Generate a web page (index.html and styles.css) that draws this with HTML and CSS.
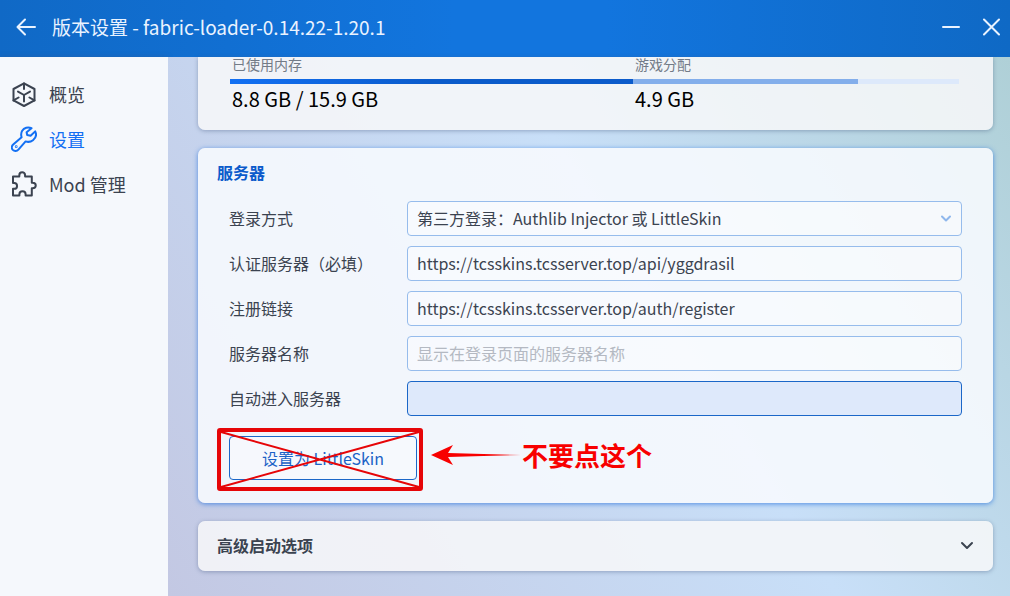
FILE: index.html
```
<!DOCTYPE html>
<html lang="zh-CN">
<head>
  <meta charset="UTF-8" />
  <meta name="viewport" content="width=device-width, initial-scale=1.0"/>
  <title>版本设置</title>
  <link rel="stylesheet" href="styles.css">
</head>
<body>
  <header class="title_bar">
    <button class="icon_button" aria-label="返回">
      <svg width="20" height="18" viewBox="0 0 20 18"><path d="M19 9H1.5M9 1.5L1.5 9L9 16.5"/></svg>
    </button>
    <h1 class="title">版本设置 - fabric-loader-0.14.22-1.20.1</h1>
    <button class="icon_button" aria-label="最小化">
      <svg width="20" height="18" viewBox="0 0 20 18"><path d="M3 9H19"/></svg>
    </button>
    <button class="icon_button" aria-label="关闭">
      <svg width="20" height="18" viewBox="0 0 20 18"><path d="M4 1.5L19 16.5M19 1.5L4 16.5"/></svg>
    </button>
  </header>

  <div class="layout">
    <nav class="sidebar">
      <a href="#" class="nav_item">
        <svg class="nav_icon" viewBox="0 0 26 26">
          <path d="M13 2.3L23.5 8V19.4L13 25L2.5 19.4V8Z"/>
          <path d="M13 14V20.5M13 14L7 10.6M13 14L19 10.6M13 2.5V8M2.5 19.4L7.6 16.5M23.5 19.4L18.4 16.5"/>
        </svg>
        概览
      </a>
      <a href="#" class="nav_item active">
        <svg class="nav_icon" viewBox="0 0 26 26">
          <path d="M20.5 2.2C17 .6 13 1.8 11.2 4.8C10 6.8 9.9 9 10.6 11.2L2.2 18.4C.4 20 .3 22.3 1.8 23.9C3.4 25.5 5.9 25.3 7.4 23.6L14.6 15.4C17 16.2 19.8 15.9 22 14.2C24.9 11.9 25.6 8.3 24.2 5.4L19.6 9.8L16.2 9L15.6 6.2Z"/>
          <circle cx="5.2" cy="20.7" r=".4"/>
        </svg>
        设置
      </a>
      <a href="#" class="nav_item">
        <svg class="nav_icon" viewBox="0 0 26 26">
          <path d="M2 5.5H8.3V4.4C8.3 .2 14.1 .2 14.1 4.4V5.5H20.8V11.8H21.6C25.8 11.8 25.8 17.2 21.6 17.2H20.8V24.5H14.6V23.2C14.6 19.2 8.4 19.2 8.4 23.2V24.5H2V17.8H3.2C7 17.8 7 12 3.2 12H2Z"/>
        </svg>
        Mod 管理
      </a>
    </nav>

    <main class="content">
      <section class="card memory_card">
        <div class="memory_col used">
          <p class="memory_label">已使用内存</p>
          <div class="bar bar_used"></div>
          <p class="memory_value">8.8 GB / 15.9 GB</p>
        </div>
        <div class="memory_col game">
          <p class="memory_label">游戏分配</p>
          <div class="bar bar_game"></div>
          <p class="memory_value">4.9 GB</p>
        </div>
        <div class="memory_col free">
          <div class="bar"></div>
        </div>
      </section>

      <section class="card server_card">
        <h2 class="card_title">服务器</h2>
        <form class="server_form">
          <label for="login_type">登录方式</label>
          <div class="select_box">
            <select id="login_type" class="field">
              <option>第三方登录：Authlib Injector 或 LittleSkin</option>
            </select>
            <svg class="select_arrow" width="12" height="8" viewBox="0 0 12 8"><path d="M2 1.5L6 5.5L10 1.5"/></svg>
          </div>

          <label for="auth_server">认证服务器（必填）</label>
          <input id="auth_server" class="field" type="text" value="https://tcsskins.tcsserver.top/api/yggdrasil">

          <label for="register_link">注册链接</label>
          <input id="register_link" class="field" type="text" value="https://tcsskins.tcsserver.top/auth/register">

          <label for="server_name">服务器名称</label>
          <input id="server_name" class="field" type="text" placeholder="显示在登录页面的服务器名称">

          <label for="auto_join">自动进入服务器</label>
          <input id="auto_join" class="field highlighted" type="text">
        </form>

        <div class="action_row">
          <div class="crossed">
            <button class="outline_button">设置为 LittleSkin</button>
            <svg class="cross" viewBox="0 0 206 62" preserveAspectRatio="none">
              <path class="cross_line" d="M4 4L202 58M202 4L4 58"/>
              <rect x="2" y="2" width="202" height="58" rx="1"/>
            </svg>
          </div>
          <div class="hint">
            <svg class="arrow" width="90" height="20" viewBox="0 0 90 20"><path d="M0 10L22 0L17 8L90 10L17 12L22 20Z"/></svg>
            <strong class="warning">不要点这个</strong>
          </div>
        </div>
      </section>

      <section class="card advanced_card">
        <h2 class="card_title">高级启动选项</h2>
        <button class="expand_button" aria-label="展开">
          <svg width="14" height="10" viewBox="0 0 14 10"><path d="M2 2L7 7L12 2"/></svg>
        </button>
      </section>
    </main>
  </div>
</body>
</html>
```
FILE: styles.css
```
* {
  box-sizing: border-box;
}

body {
  margin: 0;
  min-height: 100vh;
  display: flex;
  flex-direction: column;
  font-family: "Noto Sans CJK SC", sans-serif;
  font-size: 16px;
  font-weight: 400;
  color: #3b4350;
}

button,
input,
select {
  font: inherit;
}

h1,
h2,
p {
  margin: 0;
}

svg {
  fill: none;
  stroke: currentColor;
  stroke-width: 2;
  stroke-linecap: round;
  stroke-linejoin: round;
}

/* title bar */
.title_bar {
  display: flex;
  align-items: center;
  height: 57px;
  padding: 0 0 3px 16px;
  background: linear-gradient(90deg, #1069c6, #1275de 45%, #1275de 60%, #0f69c5);
  color: #eaf3ff;
}

.title {
  flex: 1;
  margin-left: 16px;
  font-size: 19px;
  font-weight: 400;
  line-height: 28px;
}

.icon_button {
  display: flex;
  padding: 0;
  border: none;
  background: none;
  color: inherit;
  cursor: pointer;
}

.title ~ .icon_button {
  width: 40px;
  justify-content: center;
}

.layout {
  flex: 1;
  display: flex;
}

/* sidebar */
.sidebar {
  width: 168px;
  padding-top: 15px;
  background: #f5f8fc;
  box-shadow: 0 0 5px rgba(60, 80, 120, 0.35);
}

.nav_item {
  display: flex;
  align-items: center;
  gap: 12px;
  height: 45px;
  padding-left: 11px;
  padding-bottom: 2px;
  font-size: 18px;
  color: inherit;
  text-decoration: none;
}

.nav_item.active {
  color: #1370f3;
}

.nav_icon {
  width: 26px;
  height: 26px;
}

/* content */
.content {
  flex: 1;
  display: flex;
  flex-direction: column;
  gap: 18px;
  padding: 0 17px 25px 30px;
  background: linear-gradient(58deg, #c3c8e3, #c8dff8 57%, #afd0d7);
}

.card {
  border-radius: 7px;
  background: rgba(248, 248, 249, 0.85);
  box-shadow: 0 1px 4px rgba(60, 80, 120, 0.4);
}

.card_title {
  font-size: 16px;
  font-weight: 700;
  line-height: 24px;
}

.memory_card {
  display: flex;
  height: 73px;
  padding: 0 34px 0 32px;
  border-radius: 0 0 7px 7px;
}

.memory_col {
  display: flex;
  flex-direction: column;
}

.used {
  flex: 403;
}

.game {
  flex: 225;
}

.free {
  flex: 101;
  padding-top: 22px;
}

.memory_label {
  height: 22px;
  padding-left: 2px;
  font-size: 14px;
  line-height: 14px;
  color: #737b87;
}

.bar {
  height: 5px;
  background: #dde9fb;
}

.bar_used {
  background: linear-gradient(90deg, #1370f3, #0b5bcb 50%);
}

.bar_game {
  background: #83aeeb;
}

.memory_value {
  padding: 3px 0 0 2px;
  font-size: 20px;
  line-height: 24px;
  color: #000;
}

.server_card {
  padding: 12px 31px 12px 19px;
  background: rgba(248, 251, 254, 0.88);
  box-shadow: 0 1px 5px rgba(40, 115, 220, 0.75);
}

.server_card .card_title {
  color: #0b5bcb;
}

.server_form {
  display: grid;
  grid-template-columns: 178px 1fr;
  row-gap: 10px;
  align-items: center;
  padding: 17px 0 0 12px;
}

.server_form label {
  padding-bottom: 2px;
}

.field {
  display: block;
  width: 100%;
  height: 35px;
  padding: 0 9px 2px;
  border: 1px solid #96bcec;
  border-radius: 4px;
  outline: none;
  background: rgba(255, 255, 255, 0.4);
  color: inherit;
  appearance: none;
}

.field::placeholder {
  color: #b4b9c2;
}

.field.highlighted {
  border-color: #1b67c8;
  background: #dee9fb;
}

.select_box {
  position: relative;
}

.select_arrow {
  position: absolute;
  top: 14px;
  right: 10px;
  color: #8fb7ec;
  pointer-events: none;
}

.action_row {
  display: flex;
  align-items: flex-start;
  gap: 8px;
  padding-top: 12px;
}

.crossed {
  position: relative;
  padding: 8px 6px 11px 12px;
}

.outline_button {
  display: block;
  width: 188px;
  height: 44px;
  padding-bottom: 2px;
  border: 1px solid #1b67c8;
  border-radius: 4px;
  background: rgba(255, 255, 255, 0.3);
  color: #1b62c6;
  cursor: pointer;
}

/* red marks drawn over the button */
.cross {
  position: absolute;
  top: 0;
  left: 0;
  width: 100%;
  height: 100%;
  color: #e60508;
  stroke-width: 4;
  pointer-events: none;
}

.cross_line {
  stroke-width: 2;
}

.hint {
  display: flex;
  align-items: center;
  gap: 1px;
  height: 53px;
}

.arrow {
  fill: #f80000;
  stroke: none;
}

.warning {
  font-size: 26px;
  font-weight: 700;
  line-height: 36px;
  color: #f80000;
}

.advanced_card {
  display: flex;
  align-items: center;
  justify-content: space-between;
  height: 50px;
  padding: 0 19px;
}

.advanced_card .card_title {
  padding-bottom: 3px;
}

.expand_button {
  display: flex;
  padding: 0;
  border: none;
  background: none;
  color: inherit;
  cursor: pointer;
}
```
